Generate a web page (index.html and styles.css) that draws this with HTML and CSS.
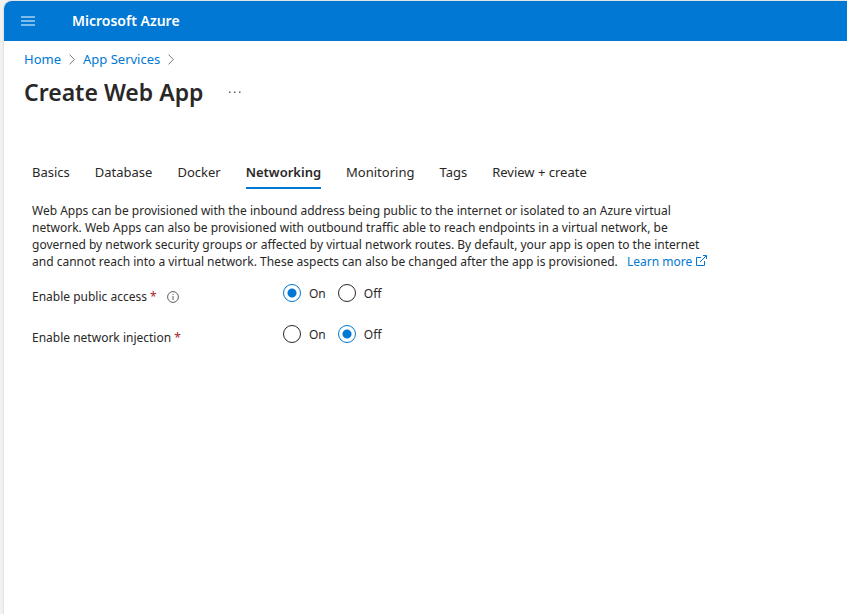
FILE: index.html
```html
<!DOCTYPE html>
<html lang="en">
<head>
<meta charset="utf-8">
<meta name="viewport" content="width=device-width, initial-scale=1">
<title>Create Web App - Microsoft Azure</title>
<link rel="stylesheet" href="styles.css">
</head>
<body>
<div class="portal">
  <header class="topbar">
    <button class="menu-button" type="button" aria-label="Show portal menu">
      <svg width="14" height="10" viewBox="0 0 14 10" aria-hidden="true"><path d="M0 0h14v2H0zM0 4h14v2H0zM0 8h14v2H0z" fill="currentColor"/></svg>
    </button>
    <a class="brand" href="#">Microsoft Azure</a>
  </header>
  <nav class="breadcrumb" aria-label="Breadcrumb">
    <a href="#">Home</a>
    <svg class="chevron" width="6" height="11" viewBox="0 0 6 11" aria-hidden="true"><path d="M.5.6 5.4 5.5.5 10.4"/></svg>
    <a href="#">App Services</a>
    <svg class="chevron" width="6" height="11" viewBox="0 0 6 11" aria-hidden="true"><path d="M.5.6 5.4 5.5.5 10.4"/></svg>
  </nav>
  <div class="title-row">
    <h1>Create Web App</h1>
    <button class="more-button" type="button" aria-label="More actions">
      <svg width="12" height="2" viewBox="0 0 12 2" aria-hidden="true"><path d="M0 .5h1.5V2H0zM5 .5h1.5V2H5zM10 .5h1.5V2H10z" fill="currentColor"/></svg>
    </button>
  </div>
  <main class="content">
    <div class="tabs" role="tablist">
      <button class="tab" type="button" role="tab">Basics</button>
      <button class="tab" type="button" role="tab">Database</button>
      <button class="tab" type="button" role="tab">Docker</button>
      <button class="tab tab-active" type="button" role="tab" aria-selected="true">Networking</button>
      <button class="tab" type="button" role="tab">Monitoring</button>
      <button class="tab" type="button" role="tab">Tags</button>
      <button class="tab" type="button" role="tab">Review + create</button>
    </div>
    <p class="intro">Web Apps can be provisioned with the inbound address being public to the internet or isolated to an Azure virtual<br>
      network. Web Apps can also be provisioned with outbound traffic able to reach endpoints in a virtual network, be<br>
      governed by network security groups or affected by virtual network routes. By default, your app is open to the internet<br>
      and cannot reach into a virtual network. These aspects can also be changed after the app is provisioned.
      <a class="learn" href="#">Learn more <svg width="11" height="11" viewBox="0 0 11 11" aria-hidden="true"><path d="M5 2.5H.5v8h8V6M4 7 10.2.8M7 .5h3.5V4"/></svg></a></p>
    <div class="field" role="radiogroup" aria-labelledby="public-label">
      <div class="field-label"><span id="public-label">Enable public access <span class="required">*</span></span>
        <svg class="info" width="12" height="12" viewBox="0 0 12 12" aria-hidden="true"><circle cx="6" cy="6" r="5.4"/><path d="M6 5v4M6 3v1"/></svg>
      </div>
      <div class="options">
        <label class="option"><input type="radio" name="public" checked>On</label>
        <label class="option"><input type="radio" name="public">Off</label>
      </div>
    </div>
    <div class="field" role="radiogroup" aria-labelledby="injection-label">
      <div class="field-label"><span id="injection-label">Enable network injection <span class="required">*</span></span></div>
      <div class="options">
        <label class="option"><input type="radio" name="injection">On</label>
        <label class="option"><input type="radio" name="injection" checked>Off</label>
      </div>
    </div>
  </main>
</div>
</body>
</html>
```
FILE: styles.css
```css
* { box-sizing: border-box; }
body {
  margin: 0;
  padding: 1px 0 0 4px;
  background: #f3f2f1;
  color: #292827;
  font-family: "Noto Sans", "Segoe UI", sans-serif;
  font-size: 12px;
  line-height: 17px;
}
button { padding: 0; border: 0; background: none; color: inherit; font: inherit; cursor: pointer; }
a { color: #0078d4; text-decoration: none; }
svg { display: block; flex: none; }
.portal {
  min-height: calc(100vh - 1px);
  background: #fff;
  border-top-left-radius: 8px;
  box-shadow: 0 0 2px #bbb;
  overflow: hidden;
}
.topbar { display: flex; align-items: center; height: 40px; background: #0078d4; }
.menu-button { display: grid; place-items: center; width: 48px; height: 40px; color: #80bcea; }
.brand { margin-left: 20px; color: #fff; font-size: 14px; font-weight: 600; line-height: 20px; }
.breadcrumb { display: flex; align-items: center; gap: 8px; padding: 8px 20px 0; font-size: 13px; line-height: 20px; }
.chevron { fill: none; stroke: #797775; }
.title-row { display: flex; align-items: center; gap: 26px; padding: 7px 20px 0; }
h1 { margin: 0; font-size: 23px; font-weight: 600; line-height: 32px; }
.more-button { color: #605e5c; }
.content { padding: 48px 28px 0; }
.tabs { display: flex; gap: 25px; }
.tab { padding: 6px 0 5px; border-bottom: 2px solid transparent; font-size: 13px; line-height: 20px; white-space: nowrap; }
.tab-active { border-color: #0078d4; font-weight: 600; }
.intro { margin: 13px 0 0; white-space: nowrap; }
.learn { margin-left: 6px; }
.learn svg { display: inline-block; margin-left: 1px; fill: none; stroke: currentColor; }
.field { display: flex; min-height: 41px; }
.intro + .field { margin-top: 14px; }
.field-label { display: flex; align-items: center; gap: 10px; width: 251px; height: 25px; }
.required { color: #a4262c; }
.info { fill: none; stroke: #605e5c; }
.options { display: flex; align-items: flex-start; gap: 12px; }
.option { display: flex; align-items: center; gap: 8px; height: 18px; }
.option input {
  appearance: none;
  width: 18px;
  height: 18px;
  margin: 0;
  border: 1px solid #292827;
  border-radius: 50%;
}
.option input:checked { border-color: #0078d4; background: radial-gradient(circle, #0078d4 4px, transparent 5px); }
```
